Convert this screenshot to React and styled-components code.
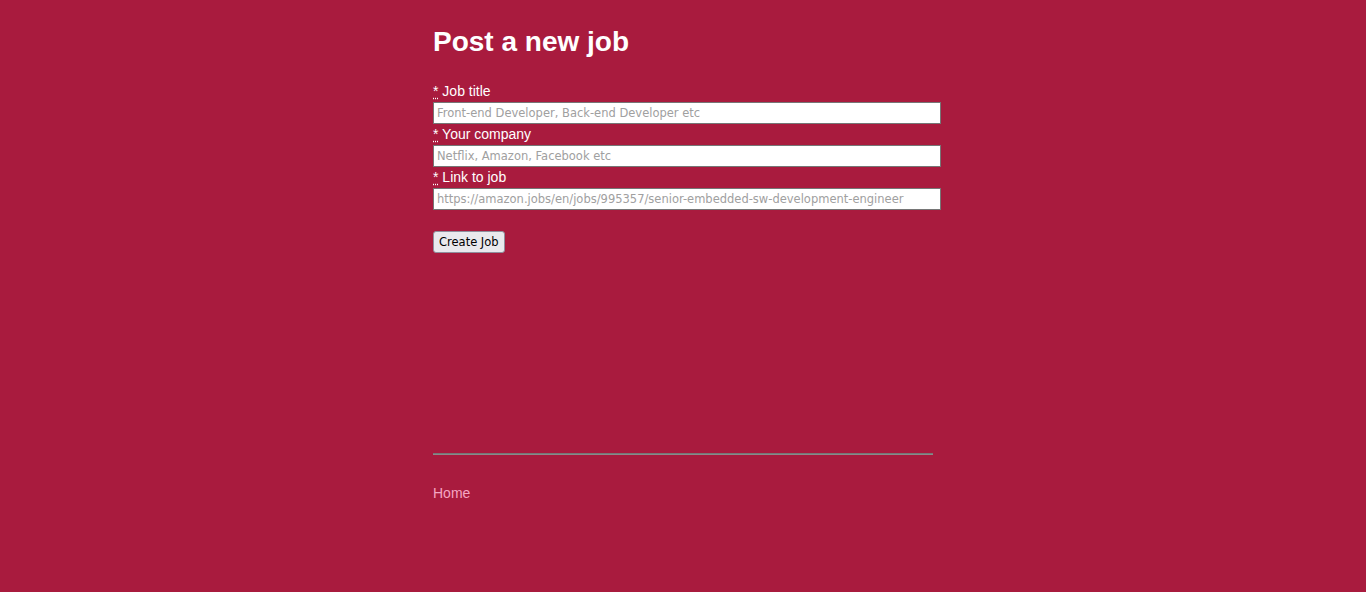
import React from "react";
import styled, { createGlobalStyle } from "styled-components";

const Global = createGlobalStyle`
  html, body { margin: 0; padding: 0; }
  body {
    background: #a91b3e;
    font-family: "Liberation Sans", Arial, sans-serif;
    color: #ffffff;
  }
`;

const Page = styled.div`
  width: 500px;
  margin: 0 auto;
  padding-top: 25px;
  min-height: 567px;
`;

const Title = styled.h1`
  font-size: 28px;
  font-weight: bold;
  margin: 0 0 24px 0;
  line-height: 34px;
`;

const Form = styled.form`
  display: flex;
  flex-direction: column;
`;

const Field = styled.div`
  display: flex;
  flex-direction: column;
  margin-bottom: 2px;
`;

const Label = styled.label`
  font-size: 14px;
  line-height: 16px;
  margin-bottom: 3px;
`;

const Req = styled.abbr`
  text-decoration: underline dotted;
  text-underline-offset: 2px;
  cursor: help;
`;

const Input = styled.input`
  box-sizing: content-box;
  width: 500px;
  height: 16px;
  padding: 2px 3px;
  margin: 0;
  border: 1px solid #767676;
  background: #fff;
  font-family: "DejaVu Sans", Verdana, sans-serif;
  font-size: 11.5px;
  color: #333;
  &::placeholder { color: #a0a0a0; }
`;

const Actions = styled.div`
  margin-top: 19px;
`;

const Button = styled.button`
  font-family: "DejaVu Sans", Verdana, sans-serif;
  font-size: 11.5px;
  height: 22px;
  padding: 1px 5px;
  background: #e9e9ed;
  color: #000;
  border: 1px solid #8f8f9d;
  border-radius: 3px;
`;

const Rule = styled.hr`
  margin: 200px 0 0 0;
  height: 0;
  border: 0;
  border-top: 1px solid #777777;
  border-bottom: 1px solid #8a8a8a;
`;

const Footer = styled.footer`
  padding-top: 29px;
`;

const HomeLink = styled.a`
  color: #f4a6c2;
  font-size: 14px;
  text-decoration: none;
`;

const fields = [
  { id: "title", label: "Job title", ph: "Front-end Developer, Back-end Developer etc" },
  { id: "company", label: "Your company", ph: "Netflix, Amazon, Facebook etc" },
  { id: "link", label: "Link to job", ph: "https://amazon.jobs/en/jobs/995357/senior-embedded-sw-development-engineer" },
];

export default function App() {
  return (
    <>
      <Global />
      <Page>
        <Title>Post a new job</Title>
        <Form onSubmit={(e) => e.preventDefault()}>
          {fields.map((f) => (
            <Field key={f.id}>
              <Label htmlFor={f.id}>
                <Req title="required">*</Req> {f.label}
              </Label>
              <Input id={f.id} placeholder={f.ph} />
            </Field>
          ))}
          <Actions>
            <Button type="submit">Create Job</Button>
          </Actions>
        </Form>
        <Rule />
        <Footer>
          <HomeLink href="#">Home</HomeLink>
        </Footer>
      </Page>
    </>
  );
}
